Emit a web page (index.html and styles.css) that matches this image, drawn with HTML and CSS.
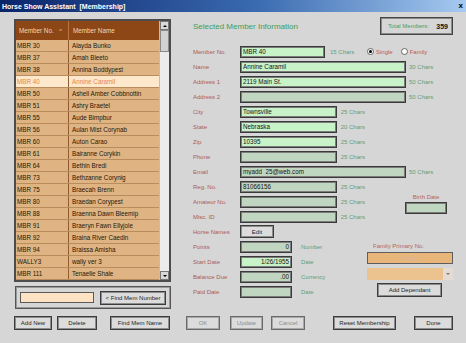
FILE: index.html
```html
<!DOCTYPE html>
<html lang="en">
<head>
    <meta charset="UTF-8">
    <title>Horse Show Assistant [Membership]</title>
    <link rel="stylesheet" href="styles.css">
</head>
<body>
    <div class="titlebar">
        <span class="title">Horse Show Assistant&nbsp; [Membership]</span>
        <span class="close">x</span>
    </div>

    <div class="main">
        <!-- Member list -->
        <div class="left">
            <div class="grid">
                <div class="grid-data">
                    <div class="grid-head">
                        <div class="c1">Member No. <span class="sort">^</span></div>
                        <div class="c2">Member Name</div>
                    </div>
                    <div class="row"><div class="c1">MBR 30</div><div class="c2">Alayda Bunko</div></div>
                    <div class="row"><div class="c1">MBR 37</div><div class="c2">Amah Bleeto</div></div>
                    <div class="row"><div class="c1">MBR 38</div><div class="c2">Annina Boddypest</div></div>
                    <div class="row selected"><div class="c1">MBR 40</div><div class="c2">Annine Caramil</div></div>
                    <div class="row"><div class="c1">MBR 50</div><div class="c2">Ashell Amber Cobbnottin</div></div>
                    <div class="row"><div class="c1">MBR 51</div><div class="c2">Ashry Braetel</div></div>
                    <div class="row"><div class="c1">MBR 55</div><div class="c2">Aude Bimpbur</div></div>
                    <div class="row"><div class="c1">MBR 56</div><div class="c2">Aulan Mist Corynab</div></div>
                    <div class="row"><div class="c1">MBR 60</div><div class="c2">Auton Carao</div></div>
                    <div class="row"><div class="c1">MBR 61</div><div class="c2">Bairanne Corykin</div></div>
                    <div class="row"><div class="c1">MBR 64</div><div class="c2">Bethin Bredi</div></div>
                    <div class="row"><div class="c1">MBR 73</div><div class="c2">Bethzanne Corynig</div></div>
                    <div class="row"><div class="c1">MBR 75</div><div class="c2">Braecah Brenn</div></div>
                    <div class="row"><div class="c1">MBR 80</div><div class="c2">Braedan Corypest</div></div>
                    <div class="row"><div class="c1">MBR 88</div><div class="c2">Braenna Dawn Bleemip</div></div>
                    <div class="row"><div class="c1">MBR 91</div><div class="c2">Braeryn Fawn Ellyjole</div></div>
                    <div class="row"><div class="c1">MBR 92</div><div class="c2">Braina River Caedin</div></div>
                    <div class="row"><div class="c1">MBR 94</div><div class="c2">Braissa Amisha</div></div>
                    <div class="row"><div class="c1">WALLY3</div><div class="c2">wally ver 3</div></div>
                    <div class="row"><div class="c1">MBR 111</div><div class="c2">Tenaelle Shale</div></div>
                </div>
                <div class="vscroll">
                    <div class="sb-btn"><span class="arrow-up"></span></div>
                    <div class="sb-thumb"></div>
                    <div class="sb-track"></div>
                    <div class="sb-btn"><span class="arrow-down"></span></div>
                </div>
            </div>

            <div class="find-box">
                <input type="text" class="find-input">
                <button class="btn find-btn">&lt; Find Mem Number</button>
            </div>
        </div>

        <!-- Member detail form -->
        <div class="right">
            <div class="right-head">
                <h1>Selected Member Information</h1>
                <div class="total">Total Members: <b>359</b></div>
            </div>

            <div class="form">
                <div class="lbl">Member No.</div>
                <div class="cell"><input class="fld req w-mid" value="MBR 40"><span class="hint">15 Chars</span></div>
                <div class="radios">
                    <span class="radio on"></span><span class="radio-lbl">Single</span>
                    <span class="radio"></span><span class="radio-lbl">Family</span>
                </div>

                <div class="lbl">Name</div>
                <div class="cell wide"><input class="fld req w-long" value="Annine Caramil"><span class="hint">30 Chars</span></div>

                <div class="lbl">Address 1</div>
                <div class="cell wide"><input class="fld req w-long" value="2119 Main St."><span class="hint">50 Chars</span></div>

                <div class="lbl">Address 2</div>
                <div class="cell wide"><input class="fld w-long" value=""><span class="hint">50 Chars</span></div>

                <div class="lbl">City</div>
                <div class="cell"><input class="fld req w-short" value="Townsville"><span class="hint">25 Chars</span></div>

                <div class="lbl">State</div>
                <div class="cell"><input class="fld req w-short" value="Nebraska"><span class="hint">20 Chars</span></div>

                <div class="lbl">Zip</div>
                <div class="cell"><input class="fld req w-short" value="10395"><span class="hint">25 Chars</span></div>

                <div class="lbl">Phone</div>
                <div class="cell"><input class="fld w-short" value=""><span class="hint">25 Chars</span></div>

                <div class="lbl">Email</div>
                <div class="cell wide"><input class="fld w-long" value="myadd_25@web.com"><span class="hint">50 Chars</span></div>

                <div class="lbl">Reg. No.</div>
                <div class="cell"><input class="fld w-short" value="81066156"><span class="hint">25 Chars</span></div>

                <div class="lbl">Amateur No.</div>
                <div class="cell"><input class="fld w-short" value=""><span class="hint">25 Chars</span></div>

                <div class="lbl">Misc. ID</div>
                <div class="cell"><input class="fld w-short" value=""><span class="hint">25 Chars</span></div>

                <div class="birth">
                    <div class="side-lbl">Birth Date</div>
                    <input class="fld birth-fld" value="">
                </div>

                <div class="lbl">Horse Names</div>
                <div class="cell"><button class="btn edit-btn">Edit</button></div>

                <div class="lbl">Points</div>
                <div class="cell"><input class="fld num w-num" value="0"><span class="hint num-hint">Number</span></div>

                <div class="lbl">Start Date</div>
                <div class="cell"><input class="fld req num w-num" value="1/26/1955"><span class="hint num-hint">Date</span></div>

                <div class="lbl">Balance Due</div>
                <div class="cell"><input class="fld num w-num" value=".00"><span class="hint num-hint">Currency</span></div>

                <div class="lbl">Paid Date</div>
                <div class="cell"><input class="fld num w-num" value=""><span class="hint num-hint">Date</span></div>

                <div class="family">
                    <div class="side-lbl family-lbl">Family Primary No.</div>
                    <div class="family-box">Single</div>
                    <div class="combo"><span class="combo-btn"><span class="arrow-down small"></span></span></div>
                    <button class="btn dep-btn">Add Dependant</button>
                </div>
            </div>
        </div>
    </div>

    <div class="footer">
        <button class="btn b-add">Add New</button>
        <button class="btn b-del">Delete</button>
        <button class="btn b-findname">Find Mem Name</button>
        <button class="btn b-ok" disabled>OK</button>
        <button class="btn b-upd" disabled>Update</button>
        <button class="btn b-cancel" disabled>Cancel</button>
        <button class="btn b-reset">Reset Membership</button>
        <button class="btn b-done">Done</button>
    </div>
</body>
</html>
```

FILE: styles.css
```css
/* Basic reset */
* {
    box-sizing: border-box;
    margin: 0;
    padding: 0;
    font-family: "Liberation Sans", Arial, sans-serif;
}
body {
    width: 466px;
    height: 343px;
    background-color: #d6d6d6;
    overflow: hidden;
    font-size: 6px;
}

/* Window title bar */
.titlebar {
    height: 12px;
    display: flex;
    align-items: center;
    justify-content: space-between;
    padding: 0 3px 0 2px;
    background: linear-gradient(to right, #0a246a 0%, #3a6ab0 55%, #a6caf0 100%);
}
.title {
    color: #fff;
    font-size: 7px;
    font-weight: bold;
    white-space: pre;
}
.close {
    color: #000;
    font-size: 8px;
    font-weight: bold;
    line-height: 8px;
}

/* Two main columns */
.main {
    display: flex;
    height: 304px;
    padding: 5px 0 0 14px;
}
.left {
    width: 157px;
    padding-top: 2px;
}
.right {
    width: 260px;
    margin-left: 22px;
}

/* Member list grid */
.grid {
    display: flex;
    height: 263px;
    border: 2px solid #4c4c4c;
    background-color: #e9e9e9;
}
.grid-data {
    width: 143px;
    background-color: #dfb482;
}
.grid-head {
    display: flex;
    height: 19px;
    align-items: center;
    background-color: #8d4716;
    color: #f6d6b4;
    font-size: 6.3px;
}
.grid-head .c1 {
    border-right: 1px solid #b87548;
    height: 100%;
    display: flex;
    align-items: center;
    justify-content: space-between;
    padding: 0 6px 0 3px;
}
.grid-head .c2 {
    padding-left: 4px;
}
.sort {
    font-size: 6px;
}
.c1 {
    width: 53px;
    flex-shrink: 0;
}
.row {
    display: flex;
    height: 12px;
    border-bottom: 1px solid #b98c5e;
    font-size: 6.3px;
    color: #24180c;
    line-height: 11px;
}
.row .c1 {
    padding-left: 1px;
    border-right: 1px solid #8e5c30;
}
.row .c2 {
    padding-left: 3px;
    white-space: nowrap;
}
.row.selected {
    background-color: #fde8cb;
    color: #e7844c;
}

/* Vertical scrollbar */
.vscroll {
    width: 10px;
    display: flex;
    flex-direction: column;
    border-left: 1px solid #bdbdbd;
}
.sb-btn {
    height: 9px;
    background-color: #d8d8d8;
    border: 1px solid #777;
    display: flex;
    align-items: center;
    justify-content: center;
}
.sb-thumb {
    height: 22px;
    background-color: #d2d2d2;
    border: 1px solid #8a8a8a;
}
.sb-track {
    flex: 1;
    background-color: #ececec;
}
.arrow-up,
.arrow-down {
    width: 0;
    height: 0;
    border-left: 2px solid transparent;
    border-right: 2px solid transparent;
}
.arrow-up {
    border-bottom: 2px solid #000;
}
.arrow-down {
    border-top: 2px solid #000;
}
.arrow-down.small {
    border-top-color: #777;
}

/* Find by number */
.find-box {
    display: flex;
    align-items: center;
    width: 156px;
    height: 23px;
    margin: 4px 0 0 1px;
    padding: 0 4px;
    border: 1px solid #555;
    box-shadow: inset 0 0 0 1px #999;
}
.find-input {
    width: 74px;
    height: 11px;
    background-color: #fde3c3;
    border: 1px solid #5a5a5a;
}
.find-btn {
    width: 67px;
    height: 14px;
    margin-left: 6px;
}

/* Generic button */
.btn {
    height: 14px;
    background-color: #dcdcdc;
    border: 1px solid #3c3c3c;
    box-shadow: inset 0 0 0 1px #8c8c8c;
    font-size: 6px;
    color: #1c1c1c;
    white-space: nowrap;
}
.btn:disabled {
    color: #8c8c8c;
    border-color: #6a6a6a;
    box-shadow: inset 0 0 0 1px #a8a8a8;
}

/* Right side heading */
.right-head {
    display: flex;
    align-items: center;
    justify-content: space-between;
    height: 18px;
}
.right-head h1 {
    font-size: 8px;
    font-weight: normal;
    color: #3d9d5c;
}
.total {
    width: 73px;
    height: 18px;
    display: flex;
    align-items: center;
    justify-content: space-between;
    padding: 0 4px 0 7px;
    border: 1px solid #444;
    box-shadow: inset 0 0 0 1px #8a8a8a;
    color: #4c9c64;
    font-size: 6px;
}
.total b {
    color: #111;
    font-size: 7px;
}

/* Detail form */
.form {
    display: grid;
    grid-template-columns: 47px 125px 88px;
    grid-auto-rows: 15px;
    margin-top: 9px;
}
.lbl {
    grid-column: 1;
    display: flex;
    align-items: center;
    color: #ad5a55;
    white-space: nowrap;
}
.cell {
    grid-column: 2;
    display: flex;
    align-items: center;
    white-space: nowrap;
}
.cell.wide {
    grid-column: 2 / span 2;
}
.fld {
    height: 12px;
    padding: 0 2px;
    background-color: #c0d6c0;
    border: 1px solid #3a3a3a;
    box-shadow: inset 0 0 0 1px #7c7c7c;
    font-size: 6.3px;
    line-height: 8px;
    color: #161616;
    outline: none;
}
.fld.req {
    background-color: #c8f2c8;
}
.fld.num {
    text-align: right;
}
.w-mid { width: 85px; }
.w-long { width: 166px; }
.w-short { width: 98px; }
.w-num { width: 52px; }
.hint {
    margin-left: 4px;
    color: #5e9e76;
}
.w-mid + .hint { margin-left: 5px; }
.w-long + .hint { margin-left: 3px; }
.num-hint { margin-left: 9px; }
.edit-btn {
    width: 34px;
    height: 13px;
}

/* Single / Family radios */
.radios {
    grid-column: 3;
    grid-row: 1;
    display: flex;
    align-items: center;
    padding-left: 2px;
}
.radio {
    width: 7px;
    height: 7px;
    border-radius: 50%;
    background-color: #fff;
    border: 1px solid #666;
    display: flex;
    align-items: center;
    justify-content: center;
}
.radio.on::after {
    content: "";
    width: 3px;
    height: 3px;
    border-radius: 50%;
    background-color: #000;
}
.radio-lbl {
    margin: 0 8px 0 2px;
    color: #c25650;
}

/* Birth date block */
.birth {
    grid-column: 3;
    grid-row: 10 / span 3;
    display: flex;
    flex-direction: column;
    align-items: center;
    width: 42px;
    margin-left: 40px;
    padding-top: 14px;
}
.side-lbl {
    color: #b5635c;
    line-height: 8px;
    white-space: nowrap;
}
.birth-fld {
    width: 42px;
    margin-top: 1px;
}

/* Family block */
.family {
    grid-column: 3;
    grid-row: 14 / span 4;
    padding: 3px 0 0 2px;
    display: flex;
    flex-direction: column;
}
.family-lbl {
    margin-left: 6px;
}
.family-box {
    width: 86px;
    height: 12px;
    margin-top: 2px;
    background-color: #e8b57a;
    border: 1px solid #5e5e5e;
    color: #d6b89c;
    text-align: center;
    line-height: 10px;
}
.combo {
    width: 86px;
    height: 12px;
    margin-top: 4px;
    background-color: #ecc28e;
    display: flex;
    justify-content: flex-end;
}
.combo-btn {
    width: 10px;
    background-color: #e4dcd4;
    display: flex;
    align-items: center;
    justify-content: center;
}
.dep-btn {
    width: 65px;
    margin: 3px 0 0 10px;
}

/* Bottom button row */
.footer {
    display: flex;
    height: 14px;
    padding-left: 14px;
}
.b-add { width: 38px; }
.b-del { width: 40px; margin-left: 5px; }
.b-findname { width: 60px; margin-left: 13px; }
.b-ok { width: 34px; margin-left: 16px; }
.b-upd { width: 33px; margin-left: 10px; }
.b-cancel { width: 34px; margin-left: 8px; }
.b-reset { width: 63px; margin-left: 28px; }
.b-done { width: 39px; margin-left: 18px; }
```
